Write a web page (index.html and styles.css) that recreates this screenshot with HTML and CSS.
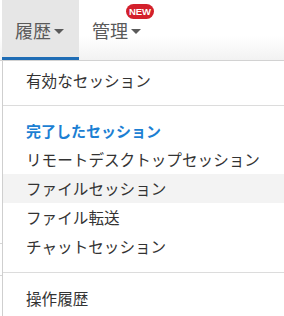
FILE: index.html
```html
<!DOCTYPE html>
<html lang="ja">
<head>
<meta charset="utf-8">
<link rel="stylesheet" href="styles.css">
</head>
<body>
<div class="page">
  <div class="header">
    <div class="tab tab-active">
      <span class="tab-label">履歴</span><span class="caret"></span>
    </div>
    <div class="tab">
      <span class="tab-label">管理</span><span class="caret"></span>
      <span class="badge">NEW</span>
    </div>
  </div>
  <div class="body">
    <div class="backdrop">
      <div class="tick tick-1"></div>
      <div class="tick tick-2"></div>
    </div>
    <div class="menu">
      <div class="item">有効なセッション</div>
      <div class="sep"></div>
      <div class="item item-head">完了したセッション</div>
      <div class="item">リモートデスクトップセッション</div>
      <div class="item item-hover">ファイルセッション</div>
      <div class="item">ファイル転送</div>
      <div class="item">チャットセッション</div>
      <div class="sep sep-2"></div>
      <div class="item">操作履歴</div>
    </div>
  </div>
</div>
</body>
</html>
```

FILE: styles.css
```css
html, body {
  margin: 0;
  padding: 0;
  background: #fff;
}
body {
  width: 284px;
  height: 316px;
  overflow: hidden;
  font-family: "Noto Sans CJK JP", "Noto Sans", sans-serif;
}
.page {
  display: flex;
  flex-direction: column;
  width: 284px;
  height: 316px;
}
.header {
  display: flex;
  height: 60px;
  padding-left: 2px;
  border-bottom: 1px solid #d2d2d2;
  background: linear-gradient(#ffffff 0%, #ffffff 60%, #f2f2f2 100%);
  flex-shrink: 0;
}
.tab {
  position: relative;
  display: flex;
  align-items: center;
  gap: 3px;
  height: 60px;
  box-sizing: border-box;
  padding: 0 15px 0 13px;
  color: #5a5a5a;
  font-size: 18px;
}
.tab-active {
  background: #e6e6e6;
  border-bottom: 3px solid #1f6db5;
  padding-top: 3px;
}
.tab-label {
  line-height: 20px;
}
.caret {
  width: 0;
  height: 0;
  border-left: 5px solid transparent;
  border-right: 5px solid transparent;
  border-top: 5px solid #5a5a5a;
  margin-top: 2px;
}
.badge {
  position: absolute;
  left: 47px;
  top: 4px;
  width: 28px;
  height: 15px;
  border-radius: 8px;
  background: #d3202b;
  color: #fff;
  font-family: "Liberation Sans", Arial, sans-serif;
  font-weight: bold;
  font-size: 9.5px;
  line-height: 15px;
  text-align: center;
}
.body {
  display: flex;
  flex: 1;
}
.backdrop {
  position: relative;
  width: 2px;
  flex-shrink: 0;
}
.tick {
  position: absolute;
  left: 0;
  width: 2px;
  height: 1px;
  background: #d6d6d6;
}
.tick-1 { top: 182px; }
.tick-2 { top: 214px; }
.menu {
  flex: 1;
  border-left: 1px solid #cfcfcf;
  padding-top: 5px;
}
.item {
  height: 29px;
  line-height: 29px;
  padding-left: 23px;
  font-size: 15.6px;
  color: #333;
  white-space: nowrap;
}
.item-head {
  color: #1c7fd3;
  font-weight: bold;
  font-size: 15px;
}
.item-hover {
  background: #f3f3f3;
}
.sep {
  height: 1px;
  background: #dcdcdc;
  margin: 10px 0;
}
.sep-2 {
  margin: 11px 0;
}
```
